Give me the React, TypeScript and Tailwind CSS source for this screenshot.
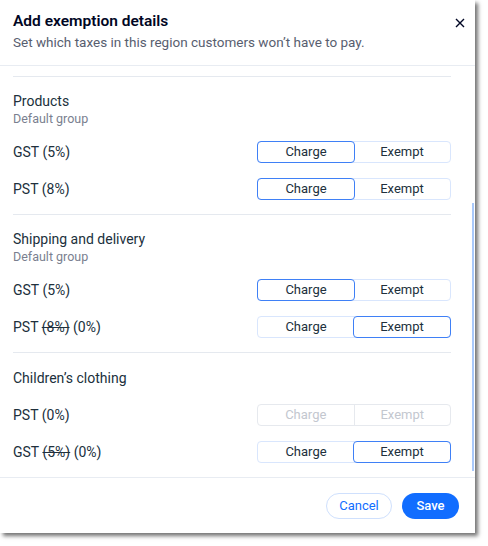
import { FC } from "react";

type Choice = "charge" | "exempt";

type Row = {
  name: string;
  old?: string;
  rate: string;
  value: Choice;
  disabled?: boolean;
};

type Group = {
  title: string;
  subtitle?: string;
  rows: Row[];
};

const groups: Group[] = [
  {
    title: "Products",
    subtitle: "Default group",
    rows: [
      { name: "GST", rate: "(5%)", value: "charge" },
      { name: "PST", rate: "(8%)", value: "charge" },
    ],
  },
  {
    title: "Shipping and delivery",
    subtitle: "Default group",
    rows: [
      { name: "GST", rate: "(5%)", value: "charge" },
      { name: "PST", old: "(8%)", rate: "(0%)", value: "exempt" },
    ],
  },
  {
    title: "Children\u2019s clothing",
    rows: [
      { name: "PST", rate: "(0%)", value: "charge", disabled: true },
      { name: "GST", old: "(5%)", rate: "(0%)", value: "exempt" },
    ],
  },
];

const Toggle: FC<{ value: Choice; disabled?: boolean }> = ({ value, disabled }) => {
  if (disabled) {
    return (
      <div className="flex w-[194px] h-[22px] rounded-[4px] border border-[#e6e9ee] text-[13px] text-[#c3c7cf]">
        <div className="flex-1 flex items-center justify-center border-r border-[#e6e9ee]">Charge</div>
        <div className="flex-1 flex items-center justify-center">Exempt</div>
      </div>
    );
  }
  const seg = (label: string, on: boolean) => (
    <div
      className={
        on
          ? "flex-1 flex items-center justify-center rounded-[4px] border border-[#3f80f6] -m-px text-[#20303c]"
          : "flex-1 flex items-center justify-center text-[#20303c]"
      }
    >
      {label}
    </div>
  );
  return (
    <div className="flex w-[194px] h-[22px] rounded-[4px] border border-[#d9e6fd] text-[13px]">
      {seg("Charge", value === "charge")}
      {seg("Exempt", value === "exempt")}
    </div>
  );
};

export default function App() {
  return (
    <div className="w-[488px] h-[546px] bg-white font-['Roboto',sans-serif]">
      <div className="relative w-[475px] h-[533px] bg-white flex flex-col shadow-[3px_3px_4px_rgba(0,0,0,0.55)]">
        <div className="px-[13px] pt-[10px] pb-[13px] border-b border-[#e8ecf2] relative">
          <h1 className="text-[15.5px] leading-[22px] font-semibold text-[#000624]">Add exemption details</h1>
          <p className="text-[13.5px] leading-5 text-[#585e6f]">
            Set which taxes in this region customers won’t have to pay.
          </p>
          <button className="absolute right-[6px] top-[14px] w-[18px] h-[18px] flex items-center justify-center">
            <svg width="10" height="10" viewBox="0 0 10 10" fill="none" stroke="#000624" strokeWidth="1.4">
              <path d="M1 1l8 8M9 1l-8 8" />
            </svg>
          </button>
        </div>

        <div className="relative flex-1 pl-[13px] pr-[24px] pt-[10px]">
          {groups.map((g) => (
            <div
              key={g.title}
              className={
                g.subtitle
                  ? "border-t border-[#e5e9ef] pt-[14px] pb-[14px]"
                  : "border-t border-[#e5e9ef] pt-[15px] pb-[14px]"
              }
            >
              <div className="text-[14px] leading-5 text-[#20303c]">{g.title}</div>
              {g.subtitle && (
                <div className="text-[12.5px] leading-4 text-[#7a7f8f]">{g.subtitle}</div>
              )}
              <div className={g.subtitle ? "flex flex-col gap-[15px] mt-[14px]" : "flex flex-col gap-[15px] mt-[16px]"}>
                {g.rows.map((r) => (
                  <div key={r.name} className="flex items-center justify-between h-[22px]">
                    <span className="text-[14px] text-[#20303c]">
                      {r.name} {r.old && <span className="line-through">{r.old}</span>} {r.rate}
                    </span>
                    <Toggle value={r.value} disabled={r.disabled} />
                  </div>
                ))}
              </div>
            </div>
          ))}
          <div className="absolute right-[1px] top-[137px] w-[2px] h-[268px] bg-[#a9c9fb]" />
        </div>

        <div className="h-[56px] border-t border-[#e8ecf2] flex items-center justify-end gap-[10px] pr-[16px]">
          <button className="h-[26px] w-[66px] rounded-full border border-[#cfe0fd] text-[13px] text-[#116dff]">
            Cancel
          </button>
          <button className="h-[26px] w-[57px] rounded-full bg-[#116dff] text-[13px] font-medium text-white">
            Save
          </button>
        </div>
      </div>
    </div>
  );
}
